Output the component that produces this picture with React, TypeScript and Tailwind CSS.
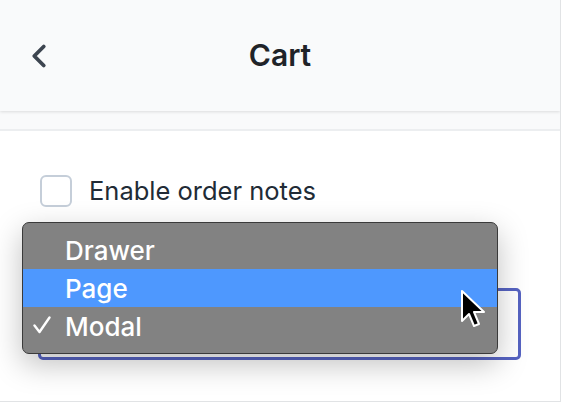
import { ChevronLeft } from "lucide-react"

const options = [
  { label: "Drawer", active: false, checked: false },
  { label: "Page", active: true, checked: false },
  { label: "Modal", active: false, checked: true },
]

export default function App() {
  return (
    <div className="relative h-[402px] w-[561px] overflow-hidden border-r border-b border-[#e1e3e5] bg-white font-['Inter',sans-serif]">
      <header className="relative z-10 flex h-[111px] items-center bg-[#f9fafb] shadow-[0_1px_3px_rgba(0,0,0,0.12)]">
        <ChevronLeft className="ml-[20px] size-[38px] text-[#3d4550]" strokeWidth={2.4} />
        <h1 className="absolute left-0 right-0 text-center text-[30px] font-semibold text-[#202328]">Cart</h1>
      </header>
      <div className="h-[20px] border-b-2 border-[#eceef0] bg-[#f9fafb]" />

      <main className="px-[38px] pt-[44px]">
        <label className="flex h-[32px] items-center gap-[17px] pl-[2px]">
          <span className="size-[32px] rounded-[6px] border-2 border-[#c5ced9] bg-white" />
          <span className="text-[25.5px] text-[#212b36]">Enable order notes</span>
        </label>
        <div className="mt-[81px] h-[72px] w-[483px] rounded-[5px] border-[3px] border-[#5663c2]" />
      </main>

      <div className="absolute left-[22px] top-[222px] w-[476px] rounded-[7px] border border-[#3a3a3a] bg-[#828282] py-[8px] shadow-[0_10px_30px_rgba(0,0,0,0.25)]">
        {options.map((o) => (
          <div
            key={o.label}
            className={`relative flex h-[38px] items-center pl-[42px] text-[26px] font-medium text-white ${o.active ? "bg-[#4e98fe]" : ""}`}
          >
            {o.checked && (
              <svg className="absolute left-[10px] top-[9px]" width="18" height="18" viewBox="0 0 18 18">
                <path d="M1.5 9.5 L6.5 16 L16.5 1.5" fill="none" stroke="#fff" strokeWidth="2.4" strokeLinecap="round" strokeLinejoin="round" />
              </svg>
            )}
            {o.label}
          </div>
        ))}
      </div>

      <svg className="absolute left-[458px] top-[288px]" width="32" height="44" viewBox="0 0 32 44">
        <path
          d="M4 3 L4 33 L11 26 L16 38 L21 36 L16 24 L26 24 Z"
          fill="#000"
          stroke="#fff"
          strokeWidth="2"
          strokeLinejoin="round"
        />
      </svg>
    </div>
  )
}
